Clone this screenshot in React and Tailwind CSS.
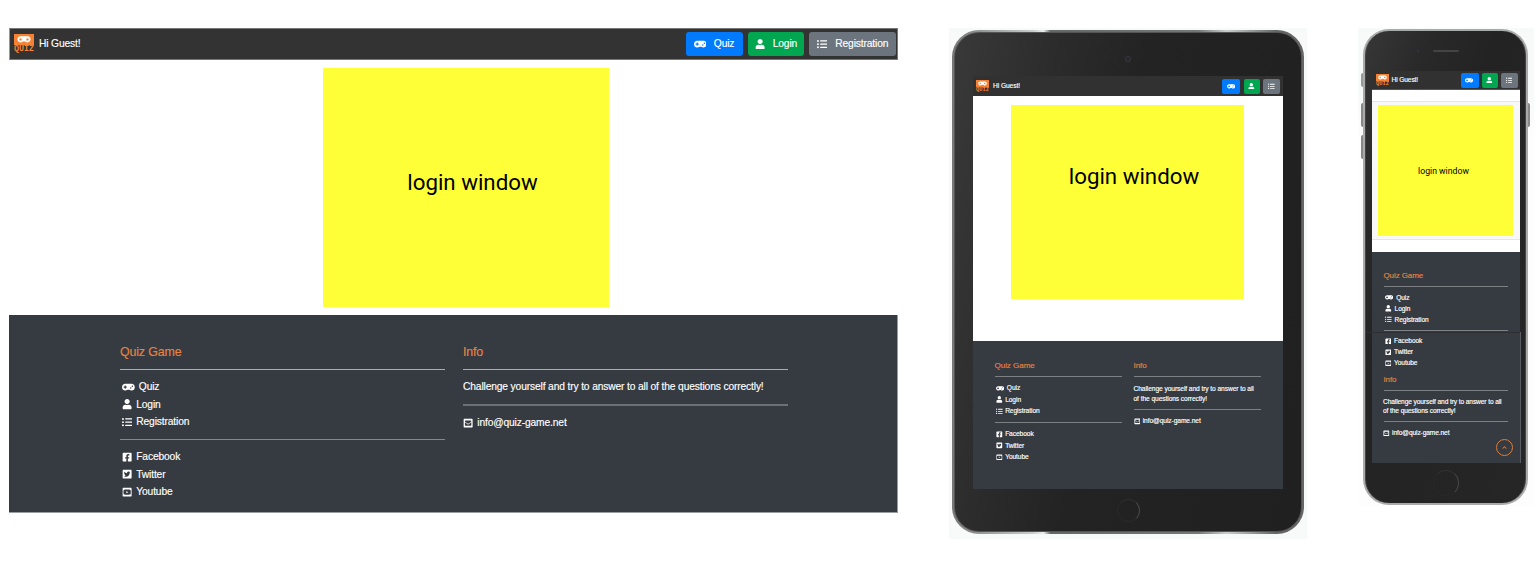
import React from "react";
import {
  FaUser,
  FaListUl,
  FaFacebookSquare,
  FaTwitterSquare,
  FaYoutubeSquare,
  FaEnvelopeSquare,
  FaChevronUp,
} from "react-icons/fa";

const ICON = "h-[1em] w-auto shrink-0";

function Gamepad({ className }) {
  return (
    <svg viewBox="0 0 640 512" fill="currentColor" className={className}>
      <path
        fillRule="evenodd"
        d="M480 88H160C71.600 88 0 163 0 256s71.600 168 160 168c44.800 0 85.200-14 114.200-40h91.500c29 26 69.500 40 114.200 40 88.400 0 160-75 160-168S568.400 88 480 88zM134 180h52v50h50v52h-50v50h-52v-50H84v-52h50zM440 268a36 36 0 1 0 0 72 36 36 0 0 0 0-72zM520 176a36 36 0 1 0 0 72 36 36 0 0 0 0-72z"
      />
    </svg>
  );
}

function Logo({ className }) {
  return (
    <svg viewBox="0 0 20 20" className={className}>
      <rect width="20" height="11.2" fill="#f58234" />
      <path
        fillRule="evenodd"
        fill="#fff"
        d="M6.500 2.200h7a3.100 3.100 0 1 1-2.300 5.200H8.800A3.100 3.100 0 1 1 6.500 2.200zM6.500 4.200a1.200 1.200 0 1 0 0 2.400 1.200 1.200 0 0 0 0-2.400zM13.500 4.200a1.200 1.200 0 1 0 0 2.400 1.200 1.200 0 0 0 0-2.400z"
      />
      <text
        x="0"
        y="17.4"
        textLength="20"
        lengthAdjust="spacingAndGlyphs"
        fontSize="8.2"
        fontWeight="700"
        fontFamily="'Liberation Mono', monospace"
        fill="#f58234"
        className="tracking-normal [-webkit-text-stroke:0]"
      >
        QUIZ
      </text>
    </svg>
  );
}

function Rows({ items, rowClass, className }) {
  return (
    <ul className={className}>
      {items.map(([Icon, label]) => (
        <li key={label} className={`flex items-center whitespace-nowrap ${rowClass}`}>
          <Icon className={ICON} />
          <span>{label}</span>
        </li>
      ))}
    </ul>
  );
}

const PAGES = [
  [Gamepad, "Quiz"],
  [FaUser, "Login"],
  [FaListUl, "Registration"],
];
const SOCIAL = [
  [FaFacebookSquare, "Facebook"],
  [FaTwitterSquare, "Twitter"],
  [FaYoutubeSquare, "Youtube"],
];
const MAIL = [[FaEnvelopeSquare, "info@quiz-game.net"]];

function Desktop() {
  return (
    <section className="mt-[28px] ml-[9px] flex h-[485px] w-[889px] shrink-0 flex-col text-[10.25px] tracking-[-0.14px] text-white [-webkit-text-stroke:0.15px]">
      <nav className="flex h-[32px] items-center border border-[#777] border-l-[#999] bg-[#333] pr-px pl-1">
        <Logo className="h-5 w-5" />
        <span className="ml-[5px]">Hi Guest!</span>
        <div className="ml-auto flex gap-[5px]">
          <button className="flex h-6 w-[56.5px] items-center gap-[7.5px] rounded-[3px] bg-[#007bff] pl-[7.5px]">
            <Gamepad className={ICON} />
            Quiz
          </button>
          <button className="flex h-6 w-[56.5px] items-center gap-[7.5px] rounded-[3px] bg-[#00a650] pl-[7.5px]">
            <FaUser className={ICON} />
            Login
          </button>
          <button className="flex h-6 w-[87px] items-center gap-2 rounded-[3px] bg-[#6c757d] pl-2">
            <FaListUl className={ICON} />
            Registration
          </button>
        </div>
      </nav>
      <main className="h-[255px] bg-white pt-[8px] pl-[314px]">
        <div className="flex h-[239px] w-[286px] items-center justify-center bg-[#ffff37] pb-[10px] pl-[13px] font-[Roboto,sans-serif] text-[22.3px] tracking-normal text-black [-webkit-text-stroke:0]">
          login window
        </div>
      </main>
      <footer className="flex h-[198px] gap-[18px] border-r border-b border-[#999ca0] bg-[#363a41] pt-[27px] pl-[111px]">
        <div className="w-[325px]">
          <h2 className="flex h-[18px] items-center pt-[2px] text-[12.4px] text-[#e68342]">Quiz Game</h2>
          <div className="mt-[9px] h-px bg-[#aaacae]" />
          <Rows items={PAGES} className="mt-[8.3px] pl-[2px]" rowClass="h-[17.4px] gap-[4px]" />
          <div className="mt-[8.5px] h-px bg-[#858889]" />
          <Rows items={SOCIAL} className="mt-[8.3px] pl-[2px]" rowClass="h-[17.4px] gap-[4px]" />
        </div>
        <div className="w-[325px]">
          <h2 className="flex h-[18px] items-center pt-[2px] text-[12.4px] text-[#e68342]">Info</h2>
          <div className="mt-[9px] h-px bg-[#aaacae]" />
          <p className="mt-[8.3px] h-[17.4px] leading-[18px] whitespace-nowrap">
            Challenge yourself and try to answer to all of the questions correctly!
          </p>
          <div className="mt-[8.3px] h-[2px] bg-[#6d7175]" />
          <Rows items={MAIL} className="mt-[8px]" rowClass="h-[17.4px] gap-[4px]" />
        </div>
      </footer>
    </section>
  );
}

function Tablet() {
  return (
    <section className="mt-[28px] ml-[51px] h-[511px] w-[358px] shrink-0 bg-[#f8faf9] pt-[2px] pl-[3px]">
      <div className="h-[504px] w-[352px] rounded-[27px] bg-[linear-gradient(90deg,#777_0%,#ccc_23%,#eee_26%,#666_28%,#777_70%,#ccc_78%,#666_92%)] p-[2px]">
        <div className="flex h-[500px] flex-col items-center rounded-[25px] border border-[#555] bg-[linear-gradient(100deg,#393939_0%,#2b2b2b_25%,#232323_45%,#202020_100%)]">
          <div className="flex h-[43px] items-center pt-[8px]">
            <div className="size-[6px] rounded-full border border-[#383842] bg-[#25252b]" />
          </div>
          <div className="flex h-[413px] w-[310px] flex-col text-[6.65px] tracking-[-0.08px] text-white [-webkit-text-stroke:0.15px]">
            <nav className="flex h-[20px] items-center bg-[#313131] pr-[3px] pl-[3px]">
              <Logo className="mt-px h-[13px] w-[13px]" />
              <span className="ml-[4px]">Hi Guest!</span>
              <div className="ml-auto flex gap-[3.5px]">
                <button className="flex h-[15px] w-[18px] items-center justify-center rounded-[2px] bg-[#007bff]">
                  <Gamepad className={ICON} />
                </button>
                <button className="flex h-[15px] w-[16px] items-center justify-center rounded-[2px] bg-[#00a650]">
                  <FaUser className={ICON} />
                </button>
                <button className="flex h-[15px] w-[17px] items-center justify-center rounded-[2px] bg-[#6c757d]">
                  <FaListUl className={ICON} />
                </button>
              </div>
            </nav>
            <main className="h-[245px] bg-white pt-[9px] pl-[38px]">
              <div className="flex h-[194px] w-[233px] items-center justify-center bg-[#ffff37] pb-[51px] pl-[13px] font-[Roboto,sans-serif] text-[22.3px] tracking-normal text-black [-webkit-text-stroke:0]">
                login window
              </div>
            </main>
            <footer className="flex h-[148px] gap-[12px] bg-[#363a41] pt-[18px] pl-[21.5px]">
              <div className="w-[127px]">
                <h2 className="flex h-[12px] items-center pt-[2px] text-[8.1px] text-[#e68342]">Quiz Game</h2>
                <div className="mt-[5px] h-px bg-[#7d8082]" />
                <Rows items={PAGES} className="mt-[5.6px] pl-[1.5px]" rowClass="h-[11.4px] gap-[2.5px]" />
                <div className="mt-[5.2px] h-px bg-[#7d8082]" />
                <Rows items={SOCIAL} className="mt-[5.6px] pl-[1.5px]" rowClass="h-[11.4px] gap-[2.5px]" />
              </div>
              <div className="w-[127px]">
                <h2 className="flex h-[12px] items-center pt-[2px] text-[8.1px] text-[#e68342]">Info</h2>
                <div className="mt-[5px] h-px bg-[#7d8082]" />
                <p className="mt-[6.5px] leading-[10px] whitespace-nowrap">
                  Challenge yourself and try to answer to all
                  <br />
                  of the questions correctly!
                </p>
                <div className="mt-[5.5px] h-px bg-[#7d8082]" />
                <Rows items={MAIL} className="mt-[5.5px]" rowClass="h-[11.4px] gap-[2.5px]" />
              </div>
            </footer>
          </div>
          <div className="flex grow items-center pt-px">
            <div className="size-[23px] rounded-full border border-[#292929] border-t-[#2f2f2f] border-r-[#484848]" />
          </div>
        </div>
      </div>
    </section>
  );
}

function Phone() {
  return (
    <section className="relative mt-[28px] ml-[51px] flex h-[478px] w-[176px] shrink-0 flex-col items-center bg-[linear-gradient(#f8faf9_0,#f8faf9_72px,#fdfdfd_110px,#fdfdfd_100%)] pt-[1px]">
      <div className="absolute top-[45px] left-[3px] h-[14px] w-[2px] rounded-l bg-[#999]" />
      <div className="absolute top-[75px] left-[3px] h-[24px] w-[2px] rounded-l bg-[#888]" />
      <div className="absolute top-[107px] left-[3px] h-[24px] w-[2px] rounded-l bg-[#888]" />
      <div className="absolute top-[75px] left-[170px] h-[24px] w-[2px] rounded-r bg-[#888]" />
      <div className="mr-[1px] h-[476px] w-[165px] rounded-[26px] bg-[#aaaaaa] p-[2px]">
        <div className="flex h-[472px] flex-col items-center rounded-[24px] border-x border-[#444] bg-[linear-gradient(110deg,#373737_0%,#292929_20%,#232323_40%,#262626_100%)]">
          <div className="flex h-[40px] items-center pt-0">
            <div className="mr-[14px] size-[2px] rounded-full bg-[#34344a]" />
            <div className="mr-[16px] h-[2px] w-[26px] rounded bg-[#444]" />
          </div>
          <div className="flex h-[392px] w-[148px] flex-col text-[6.6px] tracking-[-0.1px] text-white [-webkit-text-stroke:0.15px]">
            <nav className="flex h-[19px] items-center border-b border-[#555] bg-[#313131] pr-[2px] pl-[4px]">
              <Logo className="mt-px h-[13px] w-[13px]" />
              <span className="ml-[3px]">Hi Guest!</span>
              <div className="ml-auto flex gap-[3px]">
                <button className="flex h-[15px] w-[18px] items-center justify-center rounded-[2px] bg-[#007bff]">
                  <Gamepad className={ICON} />
                </button>
                <button className="flex h-[15px] w-[16px] items-center justify-center rounded-[2px] bg-[#00a650]">
                  <FaUser className={ICON} />
                </button>
                <button className="flex h-[15px] w-[17px] items-center justify-center rounded-[2px] bg-[#6c757d]">
                  <FaListUl className={ICON} />
                </button>
              </div>
            </nav>
            <main className="h-[162px] bg-white pt-[11px]">
              <div className="h-[139px] border-y border-[#e6e6e6] bg-[#f8f8f8] pt-[3px] pl-[6px]">
                <div className="flex h-[131px] w-[135px] items-center justify-center bg-[#ffff37] pt-[3px] pr-[3px] font-[Roboto,sans-serif] text-[8.7px] tracking-normal text-black [-webkit-text-stroke:0]">
                  login window
                </div>
              </div>
            </main>
            <footer className="relative h-[211px] bg-[#363a41] pt-[17px] pr-[12px] pl-[12px]">
              <h2 className="flex h-[12px] items-center pt-px text-[8px] text-[#e68342]">Quiz Game</h2>
              <div className="mt-[5px] h-px bg-[#7d8082]" />
              <Rows items={PAGES} className="mt-[5px] pl-[1.5px]" rowClass="h-[11px] gap-[3px]" />
              <div className="mt-[5px] h-px bg-[#7d8082]" />
              <Rows items={SOCIAL} className="mt-[4.5px] pl-[1px]" rowClass="h-[11px] gap-[3px]" />
              <h2 className="mt-[4.5px] flex h-[12px] items-center pt-px text-[8px] text-[#e68342]">Info</h2>
              <div className="mt-[5px] h-px bg-[#7d8082]" />
              <p className="mt-[5.5px] -ml-[0.5px] leading-[9.6px] tracking-[-0.1px] whitespace-nowrap">
                Challenge yourself and try to answer to all
                <br />
                of the questions correctly!
              </p>
              <div className="mt-[5.3px] h-px bg-[#7d8082]" />
              <Rows items={MAIL} className="mt-[5.5px] -ml-[0.5px]" rowClass="h-[11px] gap-[2.5px]" />
              <button className="absolute right-[7px] bottom-[7px] flex size-[17px] items-center justify-center rounded-full border border-[#d9803f] text-[5px] text-[#e68342]">
                <FaChevronUp />
              </button>
              <div className="absolute top-[80px] -left-[6px] h-px w-[154px] bg-[#2b2e33]" />
              <div className="absolute top-[80px] left-[148px] h-[131px] w-px bg-[#5a5d61]" />
            </footer>
          </div>
          <div className="flex grow items-center">
            <div className="size-[26px] rounded-full border border-[#292929] border-t-[#333] border-r-[#484848]" />
          </div>
        </div>
      </div>
    </section>
  );
}

export default function App() {
  return (
    <div className="flex h-[576px] w-[1539px] items-start overflow-hidden bg-white font-['Liberation_Sans',Arial,sans-serif]">
      <Desktop />
      <Tablet />
      <Phone />
    </div>
  );
}
